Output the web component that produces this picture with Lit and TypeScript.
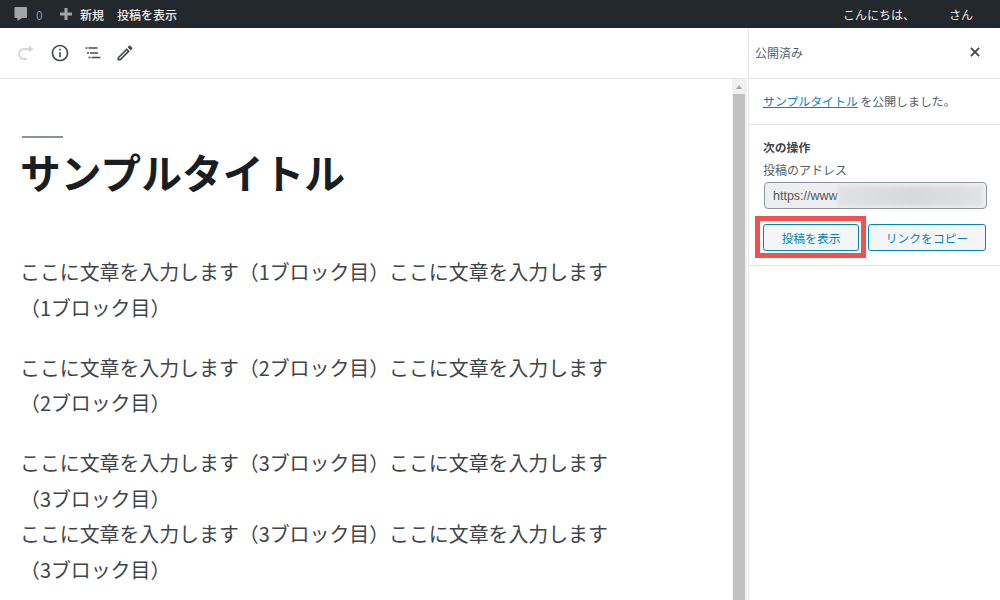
import { LitElement, html, css } from "lit";
import { customElement } from "lit/decorators.js";

const line = (n: number) => `ここに文章を入力します（${n}ブロック目）ここに文章を入力します（${n}ブロック目）`;

@customElement("app-root")
export class AppRoot extends LitElement {
  static styles = css`
    :host { display: block; width: 1000px; height: 600px; overflow: hidden; background: #fff; font-family: "Noto Sans CJK JP", "Noto Sans", sans-serif; color: #32373c; }
    * { box-sizing: border-box; }
    .adminbar { height: 28px; background: #23282d; color: #eee; display: flex; align-items: center; font-size: 12px; font-weight: 500; padding: 0 22px 0 13px; }
    .adminbar svg { display: block; flex: none; }
    .count { color: #8b9094; margin-left: 7px; width: 16px; font-size: 12px; font-weight: 400; }
    .plus { margin-left: 7px; }
    .new { margin-left: 7px; }
    .view { margin-left: 13px; }
    .greet { margin-left: auto; width: 106px; font-weight: 400; }
    .san { width: 29px; font-weight: 400; }
    .body { display: flex; height: 572px; }
    .main { width: 732px; flex: none; display: flex; flex-direction: column; }
    .toolbar { height: 51px; border-bottom: 1px solid #e2e4e7; display: flex; align-items: center; padding-left: 16px; flex: none; margin-right: -14px; }
    .toolbar svg { display: block; width: 20px; height: 20px; fill: #454b50; flex: none; }
    .toolbar .redo { fill: none; stroke: #d3d5d7; stroke-width: 2; }
    .toolbar .redo .head { fill: #d3d5d7; stroke: none; }
    .toolbar .info { margin-left: 14px; }
    .toolbar .list { margin-left: 12.5px; }
    .toolbar .pen { margin-left: 12.5px; }
    .content { padding: 57px 0 0 22px; }
    .rule { width: 41px; height: 2px; background: #8a9097; }
    h1 { margin: 5px 0 0 -2px; font-size: 40.8px; line-height: 58px; font-weight: 700; color: #191e23; white-space: nowrap; }
    .paras { margin: 53px 0 0 -2px; width: 602px; font-size: 19.9px; line-height: 35.5px; color: #40454a; }
    p { margin: 0 0 24.5px; }
    p.tight { margin: 0; }
    .scroll { width: 15px; flex: none; background: #f1f1f1; margin-top: 51px; position: relative; padding: 15px 2px 0 1px; }
    .scroll::before { content: ""; position: absolute; left: 4px; top: 6px; border: 3.5px solid transparent; border-top: 0; border-bottom: 4px solid #a3a3a3; }
    .thumb { height: 100%; background: #c1c1c1; }
    .side { flex: 1; margin-left: 1px; border-left: 1px solid #e2e4e7; min-width: 0; }
    .side-head { height: 51px; display: flex; align-items: center; justify-content: space-between; padding: 0 19px 2px 6px; border-bottom: 1px solid #e2e4e7; font-size: 12px; color: #555d66; }
    .side-head svg { display: block; width: 12px; height: 12px; fill: #40464d; }
    .notice { height: 46px; padding: 0 0 2px 14px; display: flex; align-items: center; border-bottom: 1px solid #e2e4e7; font-size: 11.9px; color: #555d66; }
    .notice a { color: #0085ba; text-decoration: underline; }
    .next { height: 141px; border-bottom: 1px solid #e2e4e7; padding: 13px 0 0 14px; }
    .next h2 { margin: 0; font-size: 11.8px; line-height: 17px; font-weight: 700; color: #40464d; }
    .label { font-size: 12px; line-height: 18px; margin-top: 6px; color: #555d66; }
    .url { margin: 3px 0 0 1px; width: 223px; height: 27px; border: 1px solid #8d96a0; border-radius: 4px; background: #eceef0; font-family: "Liberation Sans", sans-serif; font-size: 12.5px; color: #50575e; display: flex; align-items: center; padding: 1px 0 0 8px; overflow: hidden; }
    .blur { flex: none; width: 144px; height: 20px; background: linear-gradient(90deg, #e0e2e3, #d6d8da 50%, #dfe1e2); filter: blur(2px); }
    .btns { display: flex; margin-top: 15px; position: relative; }
    .btn { height: 27px; border: 1px solid #0085ba; border-radius: 3px; background: #f3f5f6; color: #0085ba; font-size: 11.8px; display: flex; align-items: center; justify-content: center; }
    .b1 { width: 96px; }
    .b2 { width: 118px; margin-left: 9px; }
    .hl { position: absolute; left: -8px; top: -8px; width: 111px; height: 42px; border: 5px solid #f05252; pointer-events: none; }
  `;

  render() {
    return html`
      <div class="adminbar">
        <svg width="16" height="16" viewBox="0 0 16 16" fill="#a0a5aa"><path d="M2.5 1H13a1 1 0 0 1 1 1v9a1 1 0 0 1-1 1H9l-4.500 3v-3H2.500a1 1 0 0 1-1-1V2a1 1 0 0 1 1-1z"/></svg>
        <span class="count">0</span>
        <svg class="plus" width="14" height="14" viewBox="0 0 14 14" fill="#a0a5aa"><path d="M5.500 1h3v4.500H13v3H8.500V13h-3V8.500H1v-3h4.500z"/></svg>
        <span class="new">新規</span>
        <span class="view">投稿を表示</span>
        <span class="greet">こんにちは、</span>
        <span class="san">さん</span>
      </div>
      <div class="body">
        <div class="main">
          <div class="toolbar">
            <svg class="redo" viewBox="0 0 20 20"><path d="M14 6H8a5 5 0 0 0 0 10h3"/><path class="head" d="M13 2.500L17.500 6 13 9.500z"/></svg>
            <svg class="info" viewBox="0 0 24 24"><path d="M11 7h2v2h-2zm0 4h2v6h-2zm1-9C6.480 2 2 6.480 2 12s4.480 10 10 10 10-4.480 10-10S17.520 2 12 2zm0 18c-4.410 0-8-3.590-8-8s3.590-8 8-8 8 3.590 8 8-3.590 8-8 8z"/></svg>
            <svg class="list" viewBox="0 0 20 20"><path d="M2.500 4.200h2v1.600h-2zM5.500 4.200h9v1.600h-9zM4 9.200h2v1.600H4zM7 9.200h8v1.600H7zM5.500 13.700h2v1.600h-2zM8.500 13.700h9v1.600h-9z"/></svg>
            <svg class="pen" viewBox="0 0 24 24"><path d="M14.060 9.020l.92.920L5.920 19H5v-.920l9.060-9.060M17.660 3c-.25 0-.51.100-.7.290l-1.830 1.830 3.750 3.750 1.830-1.830c.39-.39.39-1.020 0-1.410l-2.340-2.340c-.2-.2-.45-.29-.71-.29zm-3.600 3.190L3 17.250V21h3.750L17.810 9.940l-3.750-3.750z"/></svg>
          </div>
          <div class="content">
            <div class="rule"></div>
            <h1>サンプルタイトル</h1>
            <div class="paras">
              <p>${line(1)}</p>
              <p>${line(2)}</p>
              <p class="tight">${line(3)}</p>
              <p>${line(3)}</p>
            </div>
          </div>
        </div>
        <div class="scroll"><div class="thumb"></div></div>
        <div class="side">
          <div class="side-head"><span>公開済み</span>
            <svg viewBox="0 0 14 14"><path d="M3 1.500l4 4 4-4L12.500 3l-4 4 4 4-1.500 1.500-4-4-4 4L1.500 11l4-4-4-4z"/></svg>
          </div>
          <div class="notice"><span><a>サンプルタイトル</a> を公開しました。</span></div>
          <div class="next">
            <h2>次の操作</h2>
            <div class="label">投稿のアドレス</div>
            <div class="url">https://www<span class="blur"></span></div>
            <div class="btns">
              <div class="btn b1">投稿を表示</div>
              <div class="btn b2">リンクをコピー</div>
              <div class="hl"></div>
            </div>
          </div>
        </div>
      </div>
    `;
  }
}
